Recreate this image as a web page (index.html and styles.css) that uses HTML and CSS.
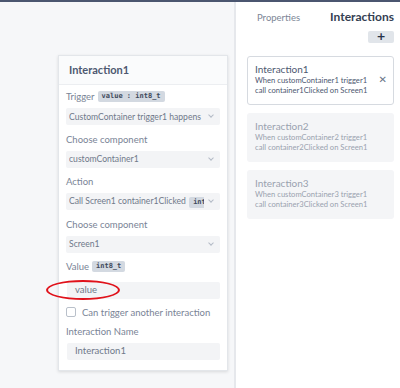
FILE: index.html
```html
<!DOCTYPE html>
<html>
<head>
	<meta charset="utf-8">
	<title>Interactions</title>
	<link rel="stylesheet" href="styles.css">
</head>
<body>
	<div class="topbar"></div>
	<div class="main">
		<div class="lienzo">
			<div class="tarjeta">
				<div class="tarjeta_cab">Interaction1</div>
				<div class="tarjeta_cuerpo">
					<div class="etiq">Trigger <span class="tipo">value : int8_t</span></div>
					<div class="selector">
						<span class="sel_txt">CustomContainer trigger1 happens</span>
						<span class="flecha"></span>
					</div>
					<div class="etiq">Choose component</div>
					<div class="selector">
						<span class="sel_txt">customContainer1</span>
						<span class="flecha"></span>
					</div>
					<div class="etiq">Action</div>
					<div class="selector">
						<span class="sel_txt">Call Screen1 container1Clicked <span class="tipo">int8_t</span></span>
						<span class="flecha"></span>
					</div>
					<div class="etiq">Choose component</div>
					<div class="selector">
						<span class="sel_txt">Screen1</span>
						<span class="flecha"></span>
					</div>
					<div class="etiq">Value<span class="tipo">int8_t</span></div>
					<div class="campo campo_valor">
						value
						<span class="marca"></span>
					</div>
					<label class="chequeo">
						<span class="caja"></span>
						Can trigger another interaction
					</label>
					<div class="etiq">Interaction Name</div>
					<div class="campo">Interaction1</div>
				</div>
			</div>
		</div>
		<div class="panel">
			<div class="pestanas">
				<span class="pestana">Properties</span>
				<span class="pestana activa">Interactions</span>
			</div>
			<div class="btns_derecha">
				<button class="btn_mas">+</button>
			</div>
			<div class="item item_activo">
				<div class="item_titulo">Interaction1</div>
				<div class="item_desc">When customContainer1 trigger1<br>call container1Clicked on Screen1</div>
				<span class="cerrar">&#x2715;</span>
			</div>
			<div class="item">
				<div class="item_titulo">Interaction2</div>
				<div class="item_desc">When customContainer2 trigger1<br>call container2Clicked on Screen1</div>
			</div>
			<div class="item">
				<div class="item_titulo">Interaction3</div>
				<div class="item_desc">When customContainer3 trigger1<br>call container3Clicked on Screen1</div>
			</div>
		</div>
	</div>
</body>
</html>
```

FILE: styles.css
```css
* {
	box-sizing: border-box;
}

body {
	margin: 0;
	width: 400px;
	height: 388px;
	overflow: hidden;
	font-family: Lato, "Open Sans", sans-serif;
	color: #6b7587;
	background: #fff;
}

.topbar {
	height: 2px;
	background: #4b5670;
}

.main {
	display: flex;
	height: 386px;
}

.lienzo {
	width: 236px;
	background: #f6f7f9;
	border-right: 2px solid #e6e8ec;
	padding: 53px 0 0 58px;
}

.tarjeta {
	width: 170px;
	background: #fff;
	border: 1px solid #e3e6ea;
	box-shadow: 0 1px 3px rgba(0, 0, 0, 0.12);
}

.tarjeta_cab {
	height: 29px;
	padding: 7px 10px 0;
	font-size: 11px;
	font-weight: 700;
	color: #4d5870;
	background: #fafbfc;
	border-bottom: 1px solid #eceef1;
}

.tarjeta_cuerpo {
	padding: 4px 7px 4px;
}

.etiq {
	display: flex;
	align-items: center;
	height: 15px;
	font-size: 9.5px;
	color: #7a8496;
	margin-bottom: 4px;
}

.tipo {
	display: inline-block;
	margin-left: 3px;
	padding: 0 4px;
	font-family: "DejaVu Sans Mono", monospace;
	font-size: 7px;
	font-weight: 700;
	line-height: 11px;
	color: #3f4a5c;
	background: #d3d9e1;
	border-radius: 2px;
}

.selector {
	display: flex;
	align-items: center;
	height: 17px;
	padding: 0 7px 0 3px;
	margin-bottom: 6.5px;
	background: #f3f4f6;
	border-radius: 2px;
	font-size: 8.6px;
	color: #6f798a;
}

.sel_txt {
	flex: 1;
	white-space: nowrap;
	overflow: hidden;
}

.selector .tipo {
	margin-left: 1px;
}

.flecha {
	width: 4px;
	height: 4px;
	margin: 0 0 3px 5px;
	border-right: 1px solid #b4bbc6;
	border-bottom: 1px solid #b4bbc6;
	transform: rotate(45deg);
}

.campo {
	position: relative;
	height: 17px;
	padding: 2px 8px 0;
	margin: 0 0 6px 1px;
	background: #f3f4f6;
	border-radius: 2px;
	font-size: 9.5px;
	color: #6f798a;
}

.campo_valor {
	margin-top: 8px;
}

.marca {
	position: absolute;
	left: -21px;
	top: -2px;
	width: 74px;
	height: 20px;
	border: 2px solid #e0121b;
	border-radius: 50%;
}

.chequeo {
	display: flex;
	align-items: center;
	height: 14px;
	margin: 0 0 5px;
	font-size: 9.5px;
	color: #7a8496;
}

.caja {
	width: 10px;
	height: 10px;
	margin-right: 6px;
	border: 1px solid #b9c0ca;
	border-radius: 2px;
	background: #fff;
}

.panel {
	flex: 1;
	padding: 0 6px 0 11px;
}

.pestanas {
	display: flex;
	justify-content: space-between;
	align-items: baseline;
	height: 29px;
	padding: 7px 0 0 10px;
}

.pestana {
	font-size: 9.5px;
	color: #7d8696;
}

.pestana.activa {
	font-size: 12px;
	font-weight: 700;
	color: #343e52;
}

.btns_derecha {
	display: flex;
	justify-content: flex-end;
	height: 25px;
}

.btn_mas {
	width: 26px;
	height: 12px;
	padding: 0;
	border: none;
	border-radius: 2px;
	background: #e1e5ea;
	color: #263248;
	font-family: "DejaVu Sans", sans-serif;
	font-size: 11px;
	font-weight: 700;
	line-height: 12px;
}

.item {
	position: relative;
	height: 49px;
	padding: 7px 8px;
	margin-bottom: 8px;
	background: #f4f5f7;
	border-radius: 3px;
	color: #9aa2af;
}

.item_activo {
	background: #fff;
	border: 1px solid #d6dae0;
	padding: 6px 7px;
	color: #4d5870;
}

.item_titulo {
	font-size: 10px;
	line-height: 12px;
}

.item_desc {
	font-size: 7.6px;
	line-height: 10px;
}

.cerrar {
	position: absolute;
	right: 6px;
	top: 17px;
	font-family: "DejaVu Sans", sans-serif;
	font-size: 10px;
	color: #6b7587;
}
```
